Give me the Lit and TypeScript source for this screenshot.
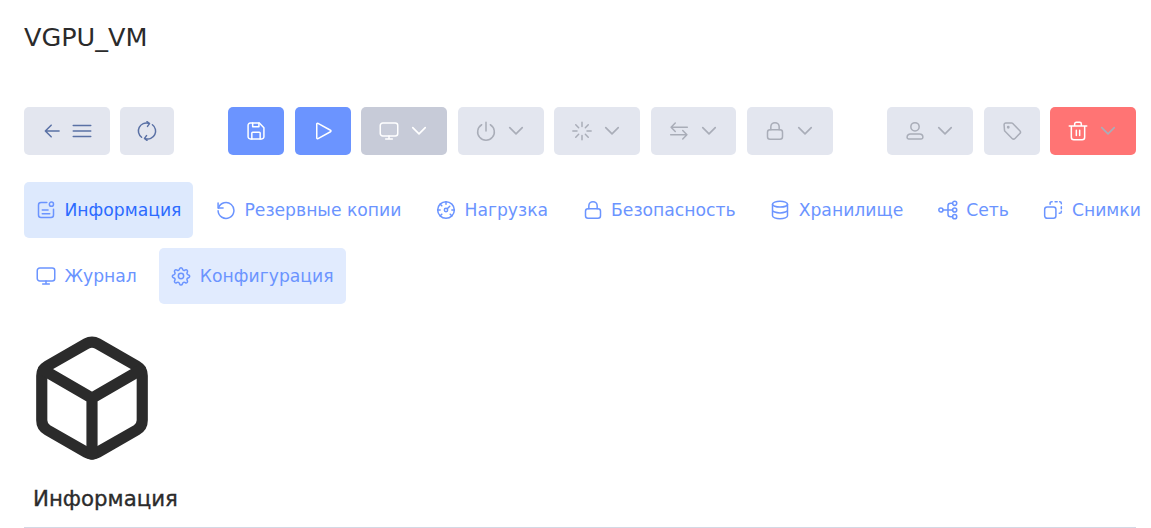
import { LitElement, html, css, svg } from "lit";
import { customElement } from "lit/decorators.js";

const icons: Record<string, unknown> = {
  back: svg`<path d="M20.500 12H4M11 5 4 12l7 7"/>`,
  menu: svg`<path d="M1.500 5.500h21M1.500 12h21M1.500 18.500h21"/>`,
  sync: svg`<path d="M5.500 19.500A9.500 9.500 0 0 1 14 2.800M18.500 4.500A9.500 9.500 0 0 1 10 21.200"/><path d="M12 .800l3 2.400-2.400 3.200M12 23.200l-3-2.400 2.400-3.200"/>`,
  save: svg`<path d="M6.500 2.500H16l5.500 5.500v11a2.500 2.500 0 0 1-2.500 2.500H5A2.500 2.500 0 0 1 2.500 19V5A2.500 2.500 0 0 1 5 2.500z"/><path d="M8 2.500v4.500h7.500V2.500M7 21.500v-7a1 1 0 0 1 1-1h8a1 1 0 0 1 1 1v7"/>`,
  play: svg`<path d="M4.500 3.700a1 1 0 0 1 1.500-.9l15 8.300a1 1 0 0 1 0 1.800L6 21.200a1 1 0 0 1-1.500-.9z"/>`,
  monitor: svg`<rect x="1.500" y="2.500" width="21" height="15.500" rx="3"/><path d="M12 18v3.500M8 21.500h8"/>`,
  chevron: svg`<path d="M4.500 8l7.500 7.500L19.500 8"/>`,
  power: svg`<path d="M12 1.500V12M6.800 4.500a10 10 0 1 0 10.400 0"/>`,
  loader: svg`<path d="M12 1.500v5M12 17.500v5M1 12h5M18 12h5M4.500 4.500l3.500 3.500M16 16l3.500 3.500M4.500 19.500 8 16M16 8l3.500-3.500"/>`,
  swap: svg`<path d="M22 7.500H2.500M7.500 2.500l-5 5 5 5M2 16.500h19.500M16.500 11.500l5 5-5 5"/>`,
  lock: svg`<rect x="3" y="10.500" width="18" height="11.500" rx="3"/><path d="M7 10.500V7a5 5 0 0 1 10 0v3.500"/>`,
  user: svg`<circle cx="12" cy="7" r="5"/><path d="M2.500 19.500a4 4 0 0 1 4-4h11a4 4 0 0 1 4 4 2 2 0 0 1-2 2h-15a2 2 0 0 1-2-2z"/>`,
  tag: svg`<path d="M2.500 4.500a2 2 0 0 1 2-2h7a2 2 0 0 1 1.400.6l8.500 8.500a2.500 2.500 0 0 1 0 3.500l-5.800 5.800a2.500 2.500 0 0 1-3.500 0l-8.500-8.500a2 2 0 0 1-.6-1.400z"/><circle cx="7.500" cy="7.500" r=".8"/>`,
  trash: svg`<path d="M1.500 6h21M8 6V3.500a2 2 0 0 1 2-2h4a2 2 0 0 1 2 2V6M4 6v13.500A3 3 0 0 0 7 22.500h10a3 3 0 0 0 3-3V6M10 11v6.500M14 11v6.500"/>`,
  info: svg`<path d="M13 3H6a3 3 0 0 0-3 3v12a3 3 0 0 0 3 3h12a3 3 0 0 0 3-3v-7"/><circle cx="18.500" cy="5" r="2.500"/><path d="M7.500 12h7M7.500 16.500h9"/>`,
  history: svg`<path d="M2.500 3.500v6h6"/><path d="M3 9.500A9.500 9.500 0 1 1 2.500 13"/>`,
  gauge: svg`<circle cx="12" cy="12" r="10"/><circle cx="12" cy="12" r="2"/><path d="M13.500 10.500 16.500 7.500M12 2v3M2 12h3M19 12h3M5 5l2 2M7 17l-2 2M17 17l2 2"/>`,
  database: svg`<ellipse cx="12" cy="5" rx="9" ry="3.500"/><path d="M3 5v14c0 1.900 4 3.500 9 3.500s9-1.600 9-3.500V5M3 12c0 1.900 4 3.500 9 3.500s9-1.600 9-3.500"/>`,
  network: svg`<circle cx="3.500" cy="12" r="2.500"/><circle cx="20" cy="4" r="2.500"/><circle cx="20" cy="12" r="2.500"/><circle cx="20" cy="20" r="2.500"/><path d="M6 12h11.500M17.500 4H15a3 3 0 0 0-3 3v10a3 3 0 0 0 3 3h2.500"/>`,
  snapshot: svg`<rect x="2" y="8.500" width="13.500" height="13.500" rx="3"/><path d="M8.500 5V4a2 2 0 0 1 2-2h.5M14.500 2h2.500M20 2a2 2 0 0 1 2 2v.5M22 8v2.500M22 13.500v.5a2 2 0 0 1-2 2h-.5"/>`,
  gear: svg`<circle cx="12" cy="12" r="3.200"/><path d="M10.300 3.200a1.800 1.800 0 0 1 3.400 0l.3.900a1.800 1.800 0 0 0 2.500 1l.8-.4a1.800 1.800 0 0 1 2.400 2.400l-.4.800a1.800 1.800 0 0 0 1 2.500l.9.300a1.800 1.800 0 0 1 0 3.400l-.9.300a1.800 1.800 0 0 0-1 2.500l.4.800a1.800 1.800 0 0 1-2.400 2.400l-.8-.4a1.800 1.800 0 0 0-2.500 1l-.3.900a1.800 1.800 0 0 1-3.400 0l-.3-.9a1.800 1.800 0 0 0-2.500-1l-.8.400a1.800 1.800 0 0 1-2.400-2.400l.4-.8a1.800 1.800 0 0 0-1-2.500l-.9-.3a1.800 1.800 0 0 1 0-3.400l.9-.3a1.800 1.800 0 0 0 1-2.500l-.4-.8a1.800 1.800 0 0 1 2.400-2.400l.8.400a1.800 1.800 0 0 0 2.500-1z"/>`,
  box: svg`<path d="M21 16V8a2 2 0 0 0-1-1.730l-7-4a2 2 0 0 0-2 0l-7 4A2 2 0 0 0 3 8v8a2 2 0 0 0 1 1.730l7 4a2 2 0 0 0 2 0l7-4A2 2 0 0 0 21 16z"/><path d="M3.270 6.960 12 12.010l8.730-5.050M12 22.080V12"/>`,
};

const icon = (name: string, cls = "") =>
  html`<svg class="ic ${cls}" viewBox="0 0 24 24">${icons[name]}</svg>`;

const tabs = [
  { label: "Информация", icon: "info", cls: "active" },
  { label: "Резервные копии", icon: "history", cls: "" },
  { label: "Нагрузка", icon: "gauge", cls: "" },
  { label: "Безопасность", icon: "lock", cls: "" },
  { label: "Хранилище", icon: "database", cls: "" },
  { label: "Сеть", icon: "network", cls: "" },
  { label: "Снимки", icon: "snapshot", cls: "" },
  { label: "Журнал", icon: "monitor", cls: "" },
  { label: "Конфигурация", icon: "gear", cls: "hover" },
];

@customElement("app-root")
export class AppRoot extends LitElement {
  static styles = css`
    :host {
      display: block;
      height: 528px;
      overflow: hidden;
      box-sizing: border-box;
      padding: 0 15px 0 24px;
      font-family: "DejaVu Sans", sans-serif;
      color: #2b2b2b;
      background: #fff;
    }
    h1 {
      margin: 0;
      padding-top: 23px;
      height: 107px;
      box-sizing: border-box;
      font-size: 25.500px;
      line-height: 29px;
      font-weight: 400;
    }
    .toolbar {
      display: flex;
      justify-content: space-between;
      height: 48px;
    }
    .group {
      display: flex;
      gap: 10.800px;
    }
    button {
      display: flex;
      align-items: center;
      justify-content: center;
      gap: 10px;
      width: 85.700px;
      height: 48px;
      padding: 0;
      border: 0;
      border-radius: 5px;
      background: #e3e6ef;
      color: #a9adb8;
    }
    button.narrow {
      width: 55.700px;
    }
    button.sync {
      width: 53.500px;
    }
    button.nav {
      color: #5a71a5;
    }
    button.primary {
      background: #6b94ff;
      color: #fff;
    }
    button.dark {
      background: #c7cbd8;
      color: #fff;
    }
    button.danger {
      background: #ff7474;
      color: #fff;
    }
    button.danger .chev {
      color: #a9adb8;
    }
    .ic {
      width: 20px;
      height: 20px;
      flex: none;
      fill: none;
      stroke: currentColor;
      stroke-width: 1.800;
      stroke-linecap: round;
      stroke-linejoin: round;
    }
    .ic.chev {
      stroke-width: 2;
    }
    .tabs {
      display: flex;
      flex-wrap: wrap;
      gap: 10px 10.500px;
      margin: 27px -21px 0 0;
    }
    .tab {
      display: flex;
      align-items: center;
      gap: 8.500px;
      height: 56px;
      padding: 0 12px;
      border-radius: 5px;
      font-size: 17.200px;
      color: #6b94ff;
    }
    .tab.active {
      background: #dde9fd;
      color: #2c6bff;
    }
    .tab.active .ic {
      color: #6b94ff;
    }
    .tab.hover {
      background: #e1ebfe;
    }
    .cube {
      display: block;
      width: 134px;
      height: 134px;
      margin: 27px 0 0 0.500px;
      fill: none;
      stroke: #2b2b2b;
      stroke-width: 2;
      stroke-linecap: round;
      stroke-linejoin: round;
    }
    h2 {
      margin: 20px 0 0 9px;
      font-size: 21.300px;
      line-height: 27px;
      font-weight: 400;
      -webkit-text-stroke: 0.350px currentColor;
    }
    hr {
      margin: 15px 0 0;
      border: 0;
      border-top: 1px solid #d3d8e4;
    }
  `;

  dropdown(name: string, cls = "") {
    return html`<button class=${cls}>${icon(name)}${icon("chevron", "chev")}</button>`;
  }

  render() {
    return html`
      <h1>VGPU_VM</h1>
      <div class="toolbar">
        <div class="group">
          <button class="nav">${icon("back")}${icon("menu")}</button>
          <button class="nav sync">${icon("sync")}</button>
        </div>
        <div class="group">
          <button class="narrow primary">${icon("save")}</button>
          <button class="narrow primary">${icon("play")}</button>
          ${this.dropdown("monitor", "dark")} ${this.dropdown("power")}
          ${this.dropdown("loader")} ${this.dropdown("swap")} ${this.dropdown("lock")}
        </div>
        <div class="group">
          ${this.dropdown("user")}
          <button class="narrow">${icon("tag")}</button>
          ${this.dropdown("trash", "danger")}
        </div>
      </div>
      <div class="tabs">
        ${tabs.map(
          (t) => html`<div class="tab ${t.cls}">${icon(t.icon)}<span>${t.label}</span></div>`
        )}
      </div>
      <svg class="cube" viewBox="0 0 24 24">${icons.box}</svg>
      <h2>Информация</h2>
      <hr />
    `;
  }
}
